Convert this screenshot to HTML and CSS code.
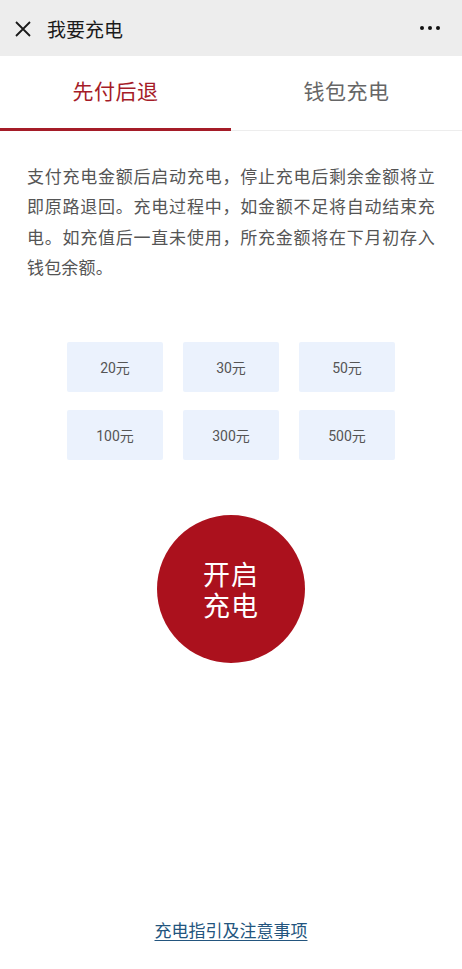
FILE: index.html
```html
<!DOCTYPE html>
<html lang="zh">
<head>
<meta charset="utf-8">
<link rel="stylesheet" href="styles.css">
</head>
<body>
<div class="page">
  <header class="topbar">
    <svg class="close" width="18" height="18" viewBox="0 0 18 18"><path d="M2 2 L16 16 M16 2 L2 16" stroke="#1a1a1a" stroke-width="1.8" fill="none"/></svg>
    <span class="title">我要充电</span>
    <span class="more"><i></i><i></i><i></i></span>
  </header>
  <nav class="tabs">
    <div class="tab active">先付后退</div>
    <div class="tab">钱包充电</div>
  </nav>
  <p class="desc">支付充电金额后启动充电，停止充电后剩余金额将立即原路退回。充电过程中，如金额不足将自动结束充电。如充值后一直未使用，所充金额将在下月初存入钱包余额。</p>
  <div class="amounts">
    <div class="amt">20元</div>
    <div class="amt">30元</div>
    <div class="amt">50元</div>
    <div class="amt">100元</div>
    <div class="amt">300元</div>
    <div class="amt">500元</div>
  </div>
  <div class="startwrap">
    <div class="start"><span>开启</span><span>充电</span></div>
  </div>
  <div class="spacer"></div>
  <a class="guide" href="#">充电指引及注意事项</a>
</div>
</body>
</html>
```
FILE: styles.css
```css
* { box-sizing: border-box; }
html, body { margin: 0; padding: 0; background: #fff; }
body { font-family: "Noto Sans CJK SC", "Noto Sans", sans-serif; }
.page { width: 462px; height: 969px; display: flex; flex-direction: column; }
.topbar { height: 56px; background: #ededed; display: flex; align-items: center; padding: 0 22px 0 14px; flex: none; }
.close { display: block; margin-top: 1px; }
.title { margin-left: 15px; font-size: 19px; color: #1a1a1a; line-height: 1; }
.more { margin-left: auto; display: flex; gap: 4px; }
.more i { width: 4px; height: 4px; border-radius: 50%; background: #111; display: block; }
.tabs { display: flex; height: 75px; border-bottom: 1px solid #ededed; flex: none; }
.tab { flex: 1; display: flex; align-items: center; justify-content: center; font-size: 21px; color: #666; padding-bottom: 7px; letter-spacing: 0.5px; }
.tab.active { color: #a51c28; border-bottom: 3px solid #a51c28; margin-bottom: -1px; padding-bottom: 4px; }
.desc { margin: 30px 0 0; padding: 0 27px; font-size: 17px; line-height: 30.3px; color: #555; letter-spacing: 0.17px; text-align: justify; }
.amounts { margin: 60px auto 0; display: grid; grid-template-columns: repeat(3, 96px); gap: 18px 20px; }
.amt { height: 50px; background: #ebf2fd; display: flex; align-items: center; justify-content: center; font-family: Roboto, "Noto Sans CJK SC", sans-serif; font-size: 14px; color: #555; border-radius: 2px; }
.startwrap { display: flex; justify-content: center; margin-top: 55px; }
.start { width: 148px; height: 148px; border-radius: 50%; background: #ab111d; color: #fff; font-size: 27px; display: flex; flex-direction: column; align-items: center; justify-content: center; text-align: center; letter-spacing: 1px; }
.start span { display: block; line-height: 31px; height: 31px; }
.spacer { flex: 1; }
.guide { align-self: center; margin-bottom: 27px; font-size: 17px; color: #23557e; text-decoration: underline; text-underline-offset: 3px; line-height: 24px; }
```
